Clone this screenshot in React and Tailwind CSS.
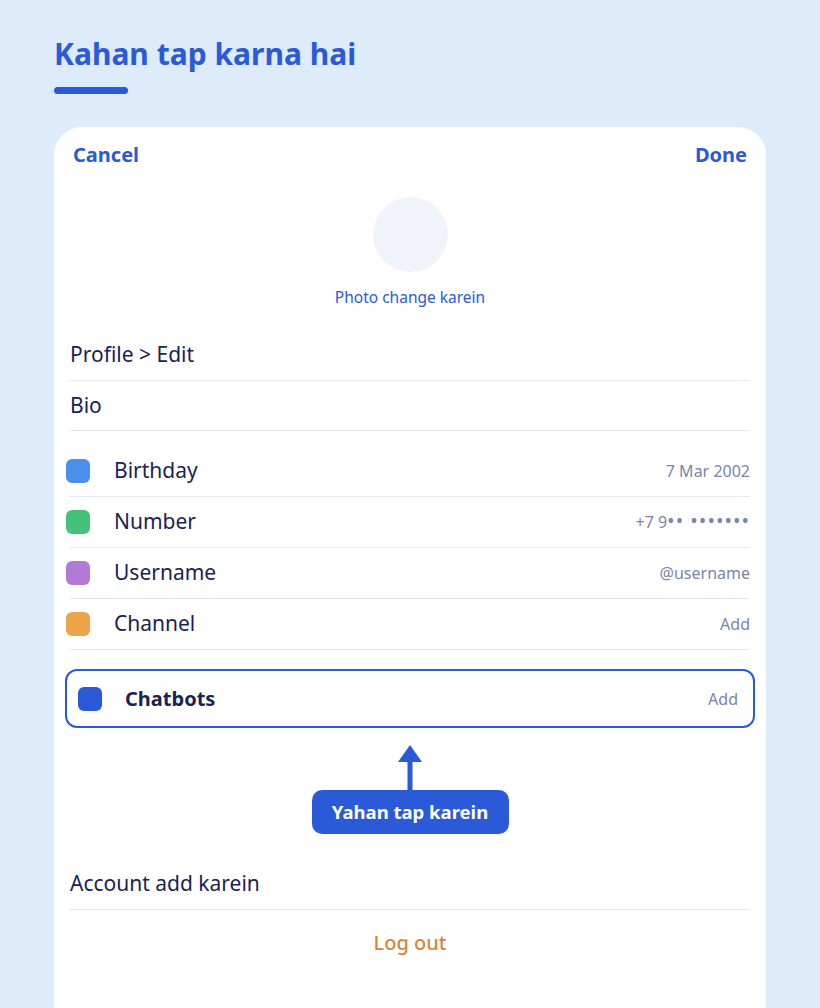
import React from "react";

const rows = [
  { label: "Birthday", value: "7 Mar 2002", color: "bg-[#4a8fea]" },
  {
    label: "Number",
    value: (
      <>
        +7 9<span className="text-[20px] leading-none tracking-[1px]">•• •••••••</span>
      </>
    ),
    color: "bg-[#45c27a]",
  },
  { label: "Username", value: "@username", color: "bg-[#b07ad6]" },
  { label: "Channel", value: "Add", color: "bg-[#eba448]" },
];

export default function App() {
  return (
    <div
      className="w-[820px] h-[1008px] overflow-hidden bg-[#deebfa] pl-[54px] pr-[54px] pt-[34px]"
      style={{ fontFamily: "'Noto Sans', Lato, sans-serif" }}
    >
      <h1 className="text-[30px] leading-[40px] font-bold text-[#2b5ad8]">
        Kahan tap karna hai
      </h1>
      <div className="mt-[13px] h-[7px] w-[74px] rounded-full bg-[#2b5ad8]" />

      <div className="mt-[33px] h-[900px] rounded-t-[28px] bg-white px-[16px]">
        <div className="flex items-center justify-between px-[3px] pt-[8px] h-[40px] box-content">
          <span className="text-[20px] font-bold text-[#2b5ad8]">Cancel</span>
          <span className="text-[20px] font-bold text-[#2b5ad8]">Done</span>
        </div>

        <div className="flex flex-col items-center pt-[22px]">
          <div className="h-[75px] w-[75px] rounded-full bg-[#f0f4fa]" />
          <div className="mt-[15px] text-[15.5px] leading-[20px] text-[#2b5ad8]">Photo change karein</div>
        </div>

        <div className="mt-[23px]">
          <div className="flex h-[51px] items-center border-b border-[#e2e7f2] text-[21px] text-[#1a2352]">
            Profile &gt; Edit
          </div>
          <div className="flex h-[50px] items-center border-b border-[#e2e7f2] text-[21px] text-[#1a2352]">
            Bio
          </div>
        </div>

        <div className="mt-[15px]">
          {rows.map((r) => (
            <div key={r.label} className="flex h-[51px] items-center border-b border-[#e2e7f2]">
              <div className={`-ml-[4px] h-[24px] w-[24px] rounded-[6px] ${r.color}`} />
              <span className="ml-[24px] text-[21px] text-[#1a2352]">{r.label}</span>
              <span className="ml-auto text-[16px] text-[#7a86a8]">{r.value}</span>
            </div>
          ))}
        </div>

        <div className="mt-[19px] -mx-[5px] flex h-[59px] items-center rounded-[12px] border-2 border-[#2b5ad8] pl-[11px] pr-[15px]">
          <div className="h-[24px] w-[24px] rounded-[6px] bg-[#2b5ad8]" />
          <span className="ml-[23px] text-[20px] font-bold text-[#1a2352]">Chatbots</span>
          <span className="ml-auto text-[16px] text-[#7a86a8]">Add</span>
        </div>

        <div className="flex flex-col items-center pt-[17px]">
          <svg width="26" height="45" viewBox="0 0 26 45">
            <polygon points="13,0 25,17 1,17" fill="#2b5ad8" />
            <rect x="10.5" y="16" width="5" height="29" fill="#2b5ad8" />
          </svg>
          <div className="flex h-[44px] w-[197px] items-center justify-center rounded-[10px] bg-[#2b5ad8] text-[18.5px] font-bold text-white">
            Yahan tap karein
          </div>
        </div>

        <div className="mt-[25px] flex h-[51px] items-center border-b border-[#e2e7f2] text-[21px] text-[#1a2352]">
          Account add karein
        </div>
        <div className="flex h-[66px] items-center justify-center text-[20px] font-medium text-[#d2873a]">
          Log out
        </div>
      </div>
    </div>
  );
}
